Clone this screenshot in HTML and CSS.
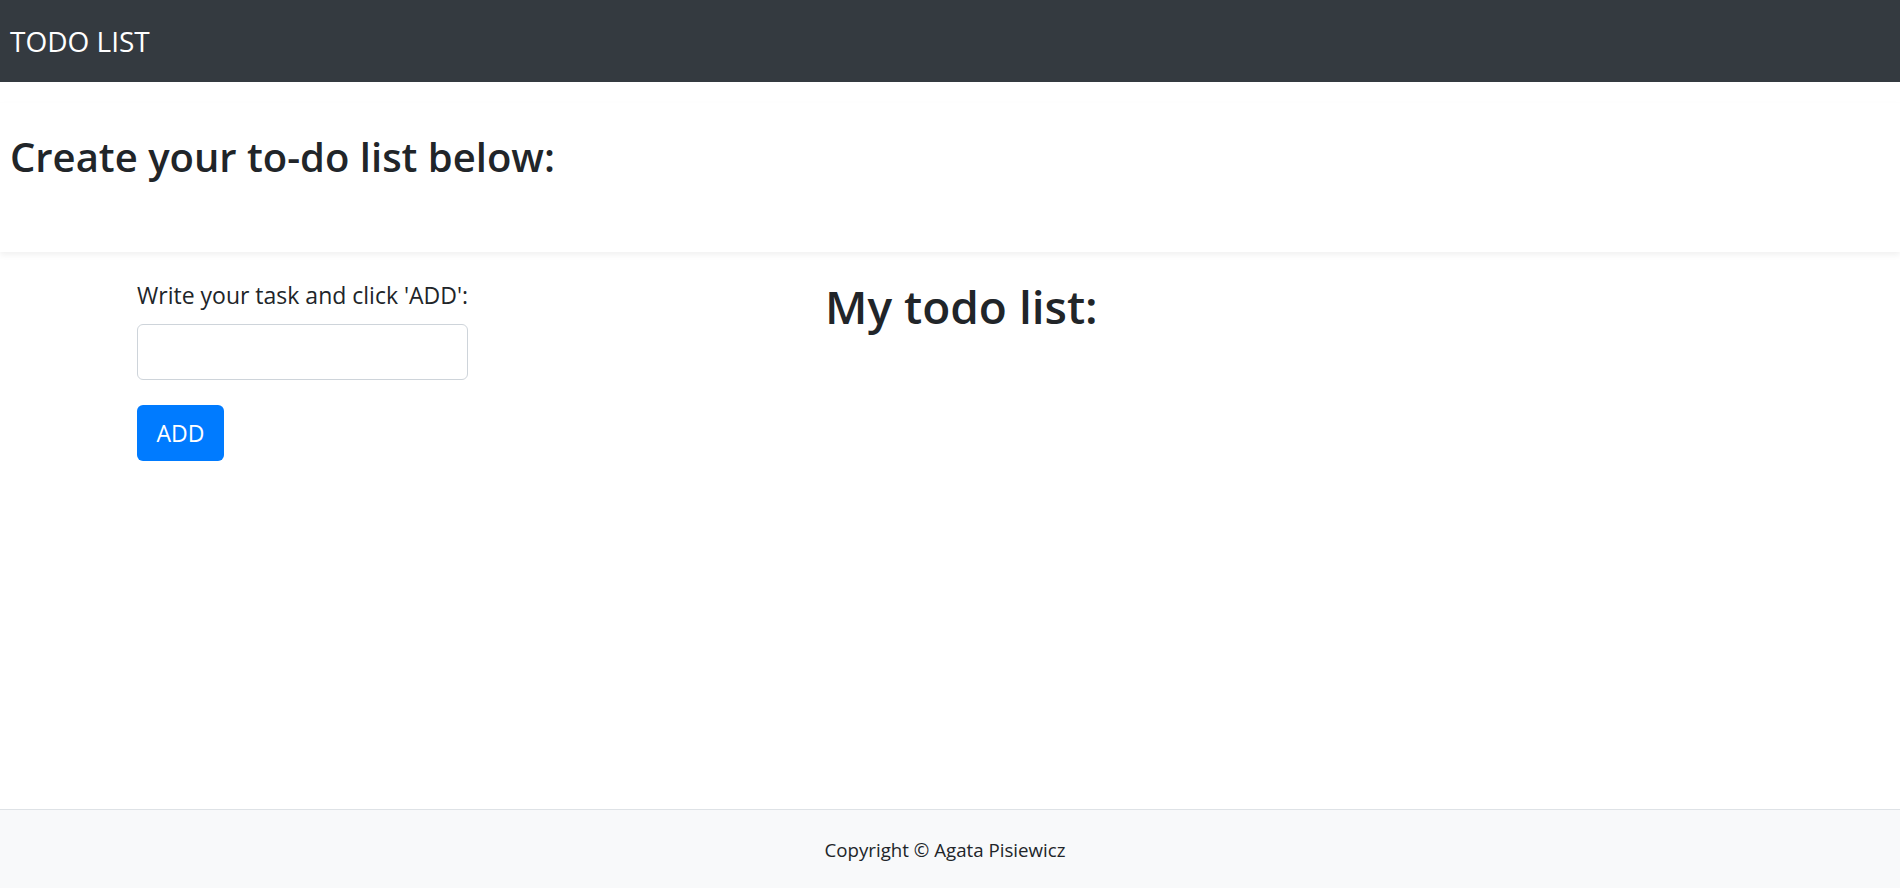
FILE: index.html
```html
<!DOCTYPE html>
<html lang="en">
<head>
<meta charset="utf-8">
<title>TODO LIST</title>
<link rel="stylesheet" href="styles.css">
</head>
<body>
  <nav class="navbar">
    <span class="brand">TODO LIST</span>
  </nav>
  <section class="intro">
    <h3 class="intro-title">Create your to-do list below:</h3>
  </section>
  <main class="main">
    <div class="form-col">
      <label class="form-label" for="task">Write your task and click 'ADD':</label>
      <input class="form-input" id="task" type="text">
      <button class="btn-add" type="button">ADD</button>
    </div>
    <div class="list-col">
      <h2 class="list-title">My todo list:</h2>
    </div>
  </main>
  <footer class="footer">
    <span class="footer-text">Copyright © Agata Pisiewicz</span>
  </footer>
</body>
</html>
```
FILE: styles.css
```css
* { box-sizing: border-box; }
html, body { height: 100%; }
body {
  margin: 0;
  font-family: "Open Sans", "Noto Sans", sans-serif;
  color: #212529;
  background: #fff;
  display: flex;
  flex-direction: column;
  min-height: 100vh;
}
.navbar {
  height: 82px;
  background: #343a40;
  padding: 0 10px;
  display: flex;
  align-items: center;
}
.brand {
  color: #fff;
  font-size: 28px;
  line-height: 82px;
}
.intro {
  margin-top: 21px;
  height: 149px;
  padding: 30px 10px 0;
  box-shadow: 0 3px 6px rgba(0, 0, 0, 0.06);
  background: #fff;
}
.intro-title {
  margin: 0;
  font-size: 40px;
  font-weight: 600;
  line-height: 1.2;
}
.main {
  display: flex;
  align-items: flex-start;
  padding: 25px 0 0 137px;
  flex: 1;
}
.form-col {
  width: 331px;
  display: flex;
  flex-direction: column;
  align-items: flex-start;
}
.form-label {
  font-size: 23px;
  line-height: 36px;
  white-space: nowrap;
}
.form-input {
  margin-top: 11px;
  width: 331px;
  height: 56px;
  border: 1.5px solid #ced4da;
  border-radius: 6px;
  padding: 8px 18px;
  font-size: 24px;
  font-family: inherit;
}
.btn-add {
  margin-top: 25px;
  width: 87px;
  height: 56px;
  border: none;
  border-radius: 6px;
  background: #007bff;
  color: #fff;
  font-family: inherit;
  font-size: 23px;
  padding: 0;
}
.list-col {
  margin-left: 357px;
}
.list-title {
  margin: 2px 0 0;
  font-size: 46px;
  font-weight: 600;
  line-height: 1.2;
}
.footer {
  height: 79px;
  border-top: 1px solid #dee2e6;
  background: #f8f9fa;
  padding: 26px 10px 0 0;
  text-align: center;
}
.footer-text {
  font-size: 18.7px;
  line-height: 1.5;
}
```
